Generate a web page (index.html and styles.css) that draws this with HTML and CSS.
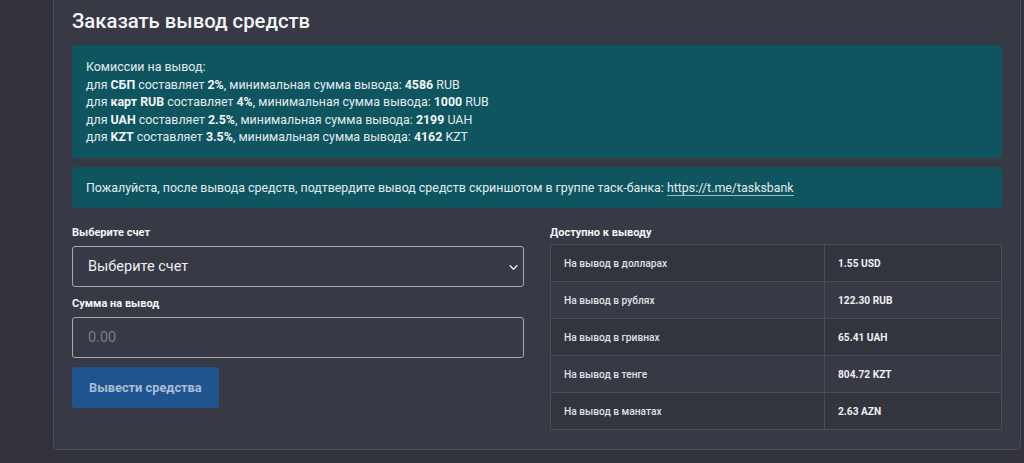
FILE: index.html
```html
<!DOCTYPE html>
<html lang="ru">
<head>
  <meta charset="UTF-8" />
  <meta name="viewport" content="width=device-width, initial-scale=1.0"/>
  <title>Вывод средств</title>
  <link rel="stylesheet" href="styles.css">
</head>
<body>
  <div class="page">
    <div class="card">
      <h2 class="card-title">Заказать вывод средств</h2>

      <div class="alert">
        Комиссии на вывод:<br>
        для <b>СБП</b> составляет <b>2%</b>, минимальная сумма вывода: <b>4586</b> RUB<br>
        для <b>карт RUB</b> составляет <b>4%</b>, минимальная сумма вывода: <b>1000</b> RUB<br>
        для <b>UAH</b> составляет <b>2.5%</b>, минимальная сумма вывода: <b>2199</b> UAH<br>
        для <b>KZT</b> составляет <b>3.5%</b>, минимальная сумма вывода: <b>4162</b> KZT
      </div>

      <div class="alert alert-link-row">
        Пожалуйста, после вывода средств, подтвердите вывод средств скриншотом в группе таск-банка: <a href="#">https://t.me/tasksbank</a>
      </div>

      <div class="row">
        <form class="col" id="withdraw-form">
          <label for="account">Выберите счет</label>
          <div class="select-wrap">
            <select id="account" name="account">
              <option>Выберите счет</option>
            </select>
            <svg class="chevron" width="9" height="9" viewBox="0 0 16 16"><path d="M2 5l6 6 6-6" fill="none" stroke="#e6e8ec" stroke-width="2.6" stroke-linecap="round" stroke-linejoin="round"/></svg>
          </div>

          <label for="amount">Сумма на вывод</label>
          <input type="text" id="amount" name="amount" placeholder="0.00">

          <button type="submit">Вывести средства</button>
        </form>

        <div class="col">
          <div class="table-label">Доступно к выводу</div>
          <table class="balance">
            <tr><td>На вывод в долларах</td><td class="val">1.55 USD</td></tr>
            <tr><td>На вывод в рублях</td><td class="val">122.30 RUB</td></tr>
            <tr><td>На вывод в гривнах</td><td class="val">65.41 UAH</td></tr>
            <tr><td>На вывод в тенге</td><td class="val">804.72 KZT</td></tr>
            <tr><td>На вывод в манатах</td><td class="val">2.63 AZN</td></tr>
          </table>
        </div>
      </div>
    </div>
  </div>
</body>
</html>
```

FILE: styles.css
```css
body {
  margin: 0;
  background: #31323c;
  font-family: Roboto, "Noto Sans", Arial, sans-serif;
  color: #fff;
}

.page {
  padding: 0 3px 0 53px;
}

.card {
  background: #373944;
  border: 1px solid #4c4e59;
  border-top: none;
  border-radius: 0 0 5px 5px;
  padding: 6px 18px 19px 18px;
}

.card-title {
  margin: 0 0 9px;
  font-size: 20.3px;
  font-weight: 500;
  line-height: 30px;
  color: #f4f5f7;
}

.alert {
  background: #0e5560;
  border-radius: 3px;
  color: #e3ebee;
  font-size: 12.4px;
  line-height: 17.5px;
  padding: 13px 14px 12px 14px;
  margin-bottom: 9px;
}

.alert b {
  font-weight: 700;
  color: #f3f6f7;
}

.alert-link-row {
  padding: 12px 14px 12px;
  margin-bottom: 18px;
}

.alert a {
  color: #e3ebee;
  text-decoration: none;
  border-bottom: 1px solid #9fb7bd;
}

.row {
  display: flex;
  gap: 26px;
}

.col {
  flex: 1;
  margin: 0;
}

label,
.table-label {
  display: block;
  font-size: 11px;
  font-weight: 700;
  color: #f4f5f7;
  margin-bottom: 6px;
  line-height: 14px;
}

.select-wrap {
  position: relative;
  margin-bottom: 10px;
}

select,
input[type="text"] {
  box-sizing: border-box;
  width: 100%;
  height: 41px;
  background: #373944;
  border: 1px solid #a7a9b0;
  border-radius: 3px;
  color: #eceef1;
  font-family: inherit;
  font-size: 14.5px;
  padding: 0 15px;
  appearance: none;
}

.chevron {
  position: absolute;
  right: 6px;
  top: 17px;
}

input[type="text"] {
  margin-bottom: 9px;
}

input::placeholder {
  color: #7c7f88;
}

button {
  height: 41px;
  padding: 0 17px;
  background: #20548f;
  color: #a9bdd6;
  border: none;
  border-radius: 3px;
  font-family: inherit;
  font-size: 12.8px;
  font-weight: 700;
}

.table-label {
  margin-bottom: 4px;
}

.balance {
  width: 100%;
  border-collapse: collapse;
  font-size: 10.2px;
}

.balance td {
  border: 1px solid #4a4c57;
  height: 36px;
  padding: 0 13px;
  color: #dfe1e5;
  font-weight: 500;
}

.balance tr:nth-child(odd) td {
  background: #32343e;
}

.balance td:first-child {
  width: 247px;
}

.balance .val {
  font-weight: 700;
  color: #eef0f2;
}
```
